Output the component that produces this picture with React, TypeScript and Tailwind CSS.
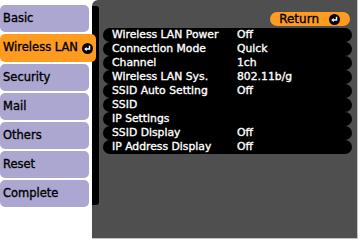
import React from "react";

function ReturnIcon({ size = 12 }: { size?: number }) {
  return (
    <svg width={size} height={size} viewBox="0 0 12 12">
      <circle cx="6" cy="6" r="6" fill="#000" />
      <path d="M8.2 3 V6.6 H4.6" stroke="#fff" strokeWidth="1.6" fill="none" />
      <polygon points="2.4,6.6 5.2,4.3 5.2,8.9" fill="#fff" />
    </svg>
  );
}

const tabs = ["Basic", "Wireless LAN", "Security", "Mail", "Others", "Reset", "Complete"];

const rows: [string, string][] = [
  ["Wireless LAN Power", "Off"],
  ["Connection Mode", "Quick"],
  ["Channel", "1ch"],
  ["Wireless LAN Sys.", "802.11b/g"],
  ["SSID Auto Setting", "Off"],
  ["SSID", ""],
  ["IP Settings", ""],
  ["SSID Display", "Off"],
  ["IP Address Display", "Off"],
];

export default function App() {
  return (
    <div className="w-[360px] h-[241px] bg-white overflow-hidden flex font-['DejaVu_Sans',sans-serif] [-webkit-text-stroke:0.35px_currentColor]">
      <div className="w-[92px] shrink-0 flex flex-col gap-[2px] pt-[5px]">
        {tabs.map((t) =>
          t === "Wireless LAN" ? (
            <div
              key={t}
              className="relative z-10 w-[96px] h-[28px] rounded-[5px] bg-[#ff9c1f] flex items-center pl-[3px] pr-[3px] justify-between text-[11.5px] text-black"
            >
              <span>{t}</span>
              <ReturnIcon size={11} />
            </div>
          ) : (
            <div
              key={t}
              className="w-[89px] h-[27px] rounded-[5px] bg-[#aba7d1] flex items-center pl-[3px] text-[11.5px] text-black"
            >
              {t}
            </div>
          )
        )}
      </div>
      <div className="w-[266px] h-[239px] shrink-0 bg-[#4f4f4f] rounded-tl-[6px] border-r border-b border-[#c4c4c4] flex">
        <div className="w-[7px] h-[199px] mt-[6px] bg-black rounded-r-[3px] shrink-0" />
        <div className="flex-1 flex flex-col pt-[12px]">
          <div className="flex justify-end pr-[7px]">
            <div className="w-[80px] h-[14px] rounded-full bg-[#ff9c1f] flex items-center justify-end pr-[10px] gap-[10px] text-[12px] leading-none text-black">
              <span>Return</span>
              <ReturnIcon size={11} />
            </div>
          </div>
          <div className="mt-[2px] ml-[4px] mr-[5px] flex flex-col">
            {rows.map(([k, v]) => (
              <div
                key={k}
                className="h-[14px] rounded-full bg-black flex items-center text-white text-[10.8px] leading-none"
              >
                <span className="w-[134px] pl-[9px] shrink-0 whitespace-nowrap">{k}</span>
                <span className="whitespace-nowrap">{v}</span>
              </div>
            ))}
          </div>
        </div>
      </div>
    </div>
  );
}
